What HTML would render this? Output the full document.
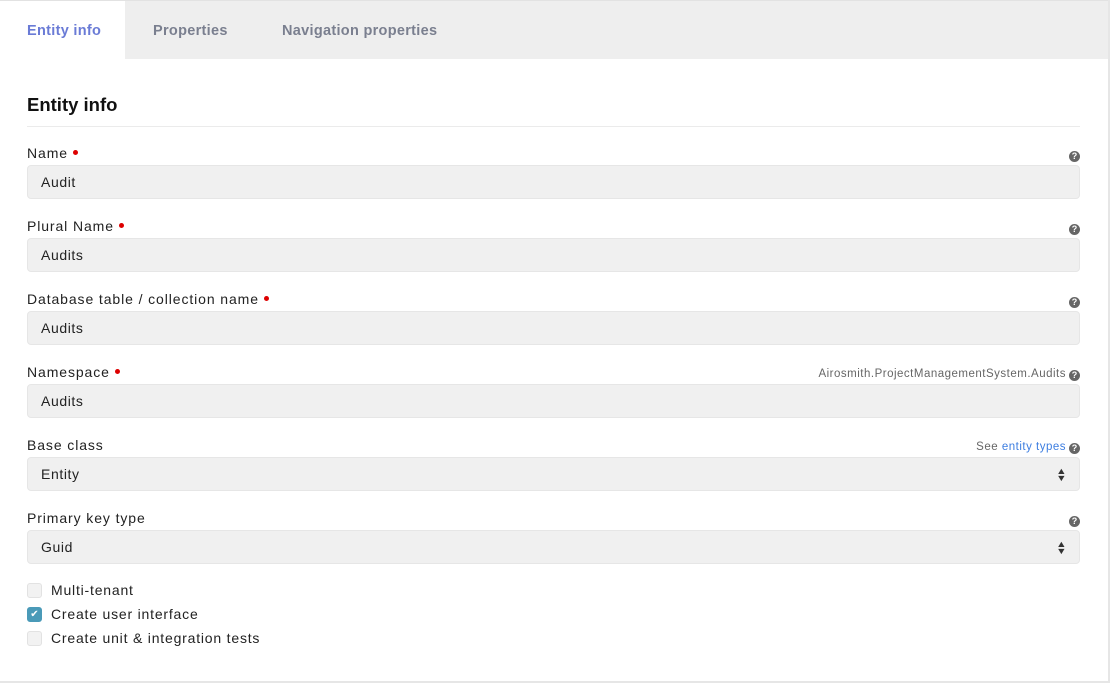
<!DOCTYPE html>
<html><head><style>
body{margin:0;width:1110px;height:683px;background:#fff;font-family:"Liberation Sans",sans-serif;position:relative;overflow:hidden;color:#222}
.tabs{position:absolute;left:0;top:0;width:1108px;height:58px;background:#eeeeee;border-top:1px solid #e2e2e2}
.tab{position:absolute;top:1px;height:58px;line-height:58px;font-size:14.5px;font-weight:bold;color:#7a7f8f;letter-spacing:0.3px}
.rb{position:absolute;right:0;top:0;width:2px;height:683px;background:#e6e6e6}
.bb{position:absolute;left:0;bottom:0;width:1110px;height:2px;background:#e6e6e6}
h2{position:absolute;left:27px;top:94px;margin:0;font-size:18.5px;font-weight:bold;color:#111}
.hr{position:absolute;left:27px;top:126px;width:1053px;height:1px;background:#ebebeb}
.lbl{position:absolute;left:27px;font-size:14px;color:#222;letter-spacing:0.9px}
.lbl i{display:inline-block;width:5px;height:5px;border-radius:50%;background:#d00;margin-left:5px;vertical-align:3px}
.inp{position:absolute;left:27px;width:1053px;height:34px;background:#f0f0f0;border:1px solid #e6e6e6;border-radius:4px;box-sizing:border-box;font-size:14px;line-height:33px;padding-left:13px;color:#222;letter-spacing:0.6px}
.q{position:absolute;right:30px;width:11px;height:11px;border-radius:50%;background:#666;color:#fff;font-size:9px;font-weight:bold;text-align:center;line-height:11px}
.hint{position:absolute;right:44px;font-size:11.5px;color:#666;letter-spacing:0.5px}
.arr{position:absolute;right:12px;top:10px;font-size:9px;line-height:7px;color:#333;transform:scaleX(1.2)}
.cb{position:absolute;left:27px;width:15px;height:15px;border:1px solid #e2e2e2;background:#f2f2f2;border-radius:3px;box-sizing:border-box}
.cbl{position:absolute;left:51px;font-size:14px;color:#222;letter-spacing:0.8px}
</style></head><body>
<div class="tabs">
<div class="tab" style="left:0;top:0;height:59px;line-height:60px;width:125px;background:#fff;color:#6a7bd6;padding-left:27px;box-sizing:border-box">Entity info</div>
<div class="tab" style="left:153px">Properties</div>
<div class="tab" style="left:282px">Navigation properties</div>
</div>
<h2>Entity info</h2><div class="hr"></div>

<div class="lbl" style="top:145px">Name<i></i></div><div class="q" style="top:151px">?</div>
<div class="inp" style="top:165px">Audit</div>
<div class="lbl" style="top:218px">Plural Name<i></i></div><div class="q" style="top:224px">?</div>
<div class="inp" style="top:238px">Audits</div>
<div class="lbl" style="top:291px">Database table / collection name<i></i></div><div class="q" style="top:297px">?</div>
<div class="inp" style="top:311px">Audits</div>
<div class="lbl" style="top:364px">Namespace<i></i></div><div class="q" style="top:370px">?</div>
<div class="hint" style="top:368px">Airosmith.ProjectManagementSystem.Audits</div>
<div class="inp" style="top:384px">Audits</div>
<div class="lbl" style="top:437px">Base class</div><div class="q" style="top:443px">?</div>
<div class="hint" style="top:441px">See <span style="color:#3c7de0">entity types</span></div>
<div class="inp" style="top:457px">Entity<div class="arr">▲<br>▼</div></div>
<div class="lbl" style="top:510px">Primary key type</div><div class="q" style="top:516px">?</div>
<div class="inp" style="top:530px">Guid<div class="arr">▲<br>▼</div></div>

<div class="cb" style="top:583px"></div><div class="cbl" style="top:582px">Multi-tenant</div>
<div class="cb" style="top:607px;background:#4a9ab8;border-color:#4a9ab8;color:#fff;font-size:10px;line-height:13px;text-align:center;letter-spacing:0">✔</div><div class="cbl" style="top:606px">Create user interface</div>
<div class="cb" style="top:631px"></div><div class="cbl" style="top:630px">Create unit &amp; integration tests</div>
<div class="rb"></div><div class="bb"></div>
</body></html>
